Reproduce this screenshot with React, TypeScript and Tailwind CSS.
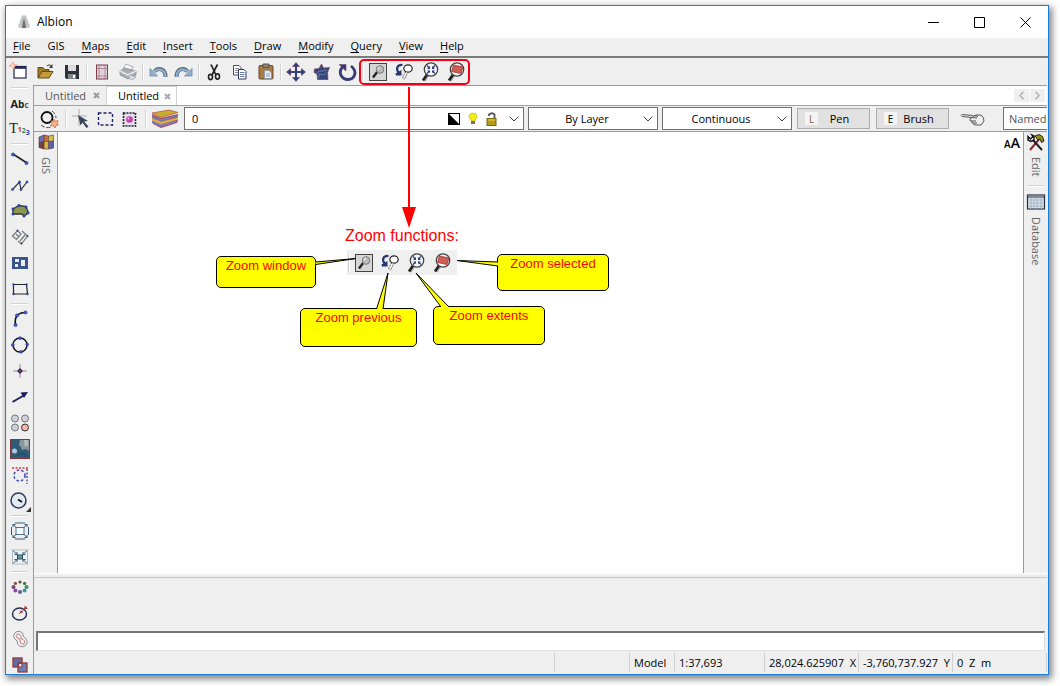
import React from 'react';
import { ChevronDown, ChevronLeft, ChevronRight } from 'lucide-react';

const menus = ['File', 'GIS', 'Maps', 'Edit', 'Insert', 'Tools', 'Draw', 'Modify', 'Query', 'View', 'Help'];

const Icon = ({ children }: { children: React.ReactNode }) => (
  <svg width="22" height="22" viewBox="0 0 22 22" fill="none" aria-hidden="true" className="shrink-0">
    {children}
  </svg>
);

const Dots = ({ points, r = 1.7 }: { points: number[][]; r?: number }) => (
  <>
    {points.map(([x, y]) => (
      <circle key={`${x}-${y}`} cx={x} cy={y} r={r} fill="#3f5bd0" stroke="#1c2f8f" strokeWidth="0.6" />
    ))}
  </>
);

/* Zoom icons, used in the toolbar and in the legend */
const ZoomWindowIcon = () => (
  <Icon>
    <rect x="2.5" y="2.5" width="17" height="17" fill="#d6d6d6" stroke="#444" />
    <path d="M10.5 10.5 6 16.5" stroke="#222" strokeWidth="2.4" />
    <circle cx="13" cy="8.5" r="3.8" fill="#b9bdbd" stroke="#777" />
    <path d="M11 8a2.3 2.3 0 0 1 2-2" stroke="#fff" />
  </Icon>
);

const ZoomPreviousIcon = () => (
  <Icon>
    <path d="M9.5 4C4.500 3.500 2.500 7.500 5.500 11.500" stroke="#27366f" strokeWidth="2.200" />
    <path d="M2.500 12.500 8.500 9v5.500H3z" fill="#27366f" />
    <ellipse cx="15" cy="7.500" rx="4.200" ry="3.700" fill="#fff" stroke="#222" strokeWidth="1.200" />
    <path d="m12.500 11-3 5.500 2 1.500 3-6" fill="#fff" stroke="#444" strokeDasharray="1.500 1" />
  </Icon>
);

const Lens = ({ children }: { children: React.ReactNode }) => (
  <Icon>
    <path d="M9.500 14 6 20" stroke="#bbb" strokeWidth="2" />
    <path d="M8.500 13 4 19.500" stroke="#222" strokeWidth="2.800" />
    <circle cx="12" cy="8.500" r="6.700" fill="#f4f6f8" stroke="#444" strokeWidth="1.300" />
    {children}
  </Icon>
);

const ZoomExtentsIcon = () => (
  <Lens>
    <path d="m8 4.500 2.500 2.500M16 4.500 13.500 7M8 12.500l2.500-2.500M16 12.500 13.500 10" stroke="#2c3a80" strokeWidth="1.200" />
    <path d="M11 5v3H8zM13 5v3h3zM11 12V9.500H8zM13 12V9.500h3z" fill="#2c3a80" />
  </Lens>
);

const ZoomSelectedIcon = () => (
  <Lens>
    <path d="m8.500 4 9.500 2-2 6.500-9.500-2z" fill="#cd5c55" stroke="#a33" strokeWidth="0.800" />
  </Lens>
);

const Lock = () => (
  <svg width="12" height="14" viewBox="0 0 12 14" fill="none" aria-hidden="true">
    <path d="M3 4V2.500Q6 0 8.500 2.500V7" stroke="#555" strokeWidth="1.800" />
    <rect x="1" y="6.500" width="9" height="7" fill="#b59a16" stroke="#7b6810" />
    <path d="M2 8h7" stroke="#e6d351" />
  </svg>
);

const mainTools: (null | [string, React.ReactNode])[] = [
  ['New', <Icon><rect x="5" y="5.500" width="12" height="11.500" fill="#fff" stroke="#26274f" strokeWidth="1.200" /><path d="M5 6.500h12" stroke="#26274f" strokeWidth="2.600" /><path d="m4 1 1 2.500L8 4 5.500 5.500 5 8 3 5.500 0 5l2.500-1.500z" fill="#ffd8c0" stroke="#f09070" strokeWidth="0.700" /></Icon>],
  ['Open', <Icon><path d="M3 17V6.500h5l1.500 2H14v2" fill="#a17b22" stroke="#5f4a1a" /><path d="M3 17 7 10.500h11L14 17z" fill="#c29b3a" stroke="#5f4a1a" /><path d="M12 5q2-2.500 4.500 0" stroke="#333" /><path d="M17.500 3v4H14z" fill="#333" /></Icon>],
  ['Save', <Icon><path d="M4 4h14v14H5.500L4 16.500z" fill="#303138" /><path d="M7 4h8v6H7z" fill="#d9dde2" /><path d="M7 13h8v5H7z" fill="#81868d" /><path d="M12 14h2v3h-2z" fill="#fff" /></Icon>],
  null,
  ['Page layout', <Icon><rect x="5.500" y="4" width="11" height="14" fill="#e0d4dc" stroke="#7b3c50" /><path d="M8 4v14M14 4v14M5.500 7.500h11M5.500 15h11" stroke="#a06a7c" strokeWidth="0.700" /></Icon>],
  ['Print', <Icon><path d="m9 3 7 3-3 5-7-3z" fill="#fff" stroke="#aaa" /><path d="m3 10 5-3 11 3v4l-8 4-8-4z" fill="#a8adb2" stroke="#8a8a8a" strokeWidth="0.800" /><path d="m3 10 8 4 8-4" stroke="#e8e8e8" strokeWidth="1.500" /><path d="m11 16 3-2 5 2-4 3z" fill="#cfe0ee" stroke="#999" strokeWidth="0.700" /></Icon>],
  null,
  ['Undo', <Icon><path d="M18.500 16C18.500 7.500 11 6 7.500 10.500" stroke="#52647b" strokeWidth="4" /><path d="M18.500 16C18.500 8 11 6.500 7.500 10.500" stroke="#94afcb" strokeWidth="2.200" /><path d="M3 7.500v7.500h7.500z" fill="#94afcb" stroke="#6f88a5" strokeWidth="0.800" /></Icon>],
  ['Redo', <Icon><path d="M3.500 16C3.500 7.500 11 6 14.500 10.500" stroke="#52647b" strokeWidth="4" /><path d="M3.500 16C3.500 8 11 6.500 14.500 10.500" stroke="#94afcb" strokeWidth="2.200" /><path d="M19 7.500v7.500h-7.500z" fill="#94afcb" stroke="#6f88a5" strokeWidth="0.800" /></Icon>],
  null,
  ['Cut', <Icon><path d="M8 3.500 13 14M14.500 3.500 9 14" stroke="#222" strokeWidth="1.700" /><ellipse cx="7.500" cy="16" rx="2" ry="2.600" stroke="#222" strokeWidth="1.600" /><ellipse cx="14.500" cy="15.500" rx="2" ry="2.600" stroke="#222" strokeWidth="1.600" /></Icon>],
  ['Copy', <Icon><path d="M4.500 4.500H10l2 2v7.500H4.500z" fill="#fff" stroke="#444a68" /><path d="M6 7.500h4M6 9.500h4M6 11.500h4" stroke="#889" /><path d="M9.500 8.500H15l2 2v7.500H9.500z" fill="#fff" stroke="#30365f" /><path d="M11 11.500h4.500M11 13.500h4.500M11 15.500h4.500" stroke="#6677a0" /></Icon>],
  ['Paste', <Icon><rect x="4" y="4.500" width="14" height="13.500" rx="1" fill="#a87c42" stroke="#67492a" /><path d="M8 3h6v3.500H8z" fill="#8b8781" stroke="#555" /><path d="M9.500 9.500H14l2.500 2.500v5.500h-7z" fill="#e9edf2" stroke="#8793a3" strokeWidth="0.800" /><path d="M11 13h4M11 15h4" stroke="#91a2b8" /></Icon>],
  null,
  ['Move', <Icon><path d="M11 3v16M3 11h16" stroke="#35417c" strokeWidth="2" /><path d="m11 1.500 3.500 4h-7zM11 20.500l3.500-4h-7zM1.500 11l4-3.500v7zM20.500 11l-4-3.500v7z" fill="#35417c" stroke="#602d48" strokeWidth="0.500" /></Icon>],
  ['Edit polygon', <Icon><path d="m10.500 3 2 4 6-.5-2 5 .5 7H6.500L6 13 3 11.500 3.500 8 8 7.500z" fill="#35467c" stroke="#803e55" strokeWidth="0.700" /><path d="m6 12 2-2h4l4-1M7.500 17l1-4 4 1 3-2" stroke="#6e7ba8" /></Icon>],
  ['Rotate', <Icon><path d="M5.500 6C.5 12 5 18.500 11 18.500S21.500 11 14 5" stroke="#343b74" strokeWidth="2.800" /><path d="M2 3.500h7v6.500z" fill="#343b74" stroke="#73364b" strokeWidth="0.500" /></Icon>],
  null,
  ['Zoom window', <ZoomWindowIcon />],
  ['Zoom previous', <ZoomPreviousIcon />],
  ['Zoom extents', <ZoomExtentsIcon />],
  ['Zoom selected', <ZoomSelectedIcon />],
];

const ring = Array.from({ length: 8 }, (_, i) => [11 + 6.5 * Math.cos((i * Math.PI) / 4), 11 + 5 * Math.sin((i * Math.PI) / 4)]);
const ringColors = ['#3e8a75', '#4f8f8f', '#5d5c9c', '#8a4a9a', '#7a3f87', '#7d5a40', '#6b5530', '#3f7a3b'];

const sideTools: (null | [string, React.ReactNode])[] = [
  null,
  ['Text style', <span className="flex items-baseline font-['Open_Sans',sans-serif] text-[11px] font-bold leading-none text-[#222]">A<span className="text-[10px]">b</span><span className="text-[8px] text-[#555]">c</span></span>],
  ['Numbered text', <span className="flex items-start font-['Liberation_Serif',serif] text-sm leading-none text-[#222]">T<span className="flex pt-1 font-['Open_Sans',sans-serif] text-[7px] leading-none font-bold"><span className="text-[#a23a3a]">1</span><span className="pt-px text-[#3a8a4a]">2</span><span className="pt-[3px] text-[#33409a]">3</span></span></span>],
  null,
  ['Line', <Icon><path d="m4 6 14 9" stroke="#222" strokeWidth="1.500" /><Dots points={[[4, 6.5], [17.5, 15]]} r={1.6} /></Icon>],
  ['Polyline', <Icon><path d="m3.500 15.500 7-7.500 1.500 7.500L18 8" stroke="#333" strokeWidth="1.200" /><Dots points={[[3.5, 15.5], [10.5, 8], [12, 15.5], [18, 8]]} r={1.1} /></Icon>],
  ['Polygon', <Icon><path d="M4 9 10 5.500l7 1L19.500 13 15 16l-2-2H4z" fill="#8b9653" stroke="#333" strokeWidth="1.300" /><Dots points={[[4, 9], [10, 5.5], [17, 7], [19, 13], [15, 16], [4, 14]]} r={1.2} /></Icon>],
  ['Parallel lines', <Icon><path d="m3.500 10 5-5.500L12 8l-4.500 5.500zM7 8l3 3M13 5l5.500 5-6 8-3.500-3M16 9l-5 6" stroke="#777" strokeWidth="1.200" /><Dots points={[[8.5, 4.500], [18.5, 10], [12.5, 17.5]]} r={0.7} /></Icon>],
  ['Block', <Icon><rect x="3" y="5" width="16" height="12" fill="#3b5488" /><path d="M6 7h4v3H6zM12 8h4v6h-4zM6 12h3v3H6z" fill="#e8ecf3" /></Icon>],
  ['Rectangle', <Icon><path d="M4.500 6.500h13l1 9.500h-14z" stroke="#222" strokeWidth="1.200" /><Dots points={[[4.5, 6.5], [17.5, 6.5], [18.5, 16], [4.5, 16]]} r={0.9} /></Icon>],
  null,
  ['Arc', <Icon><path d="M6.500 17Q4.500 4.500 17 4.500" stroke="#111" strokeWidth="1.600" /><Dots points={[[6.5, 17], [8, 7.5], [16.5, 4.5]]} r={1.6} /></Icon>],
  ['Circle', <Icon><circle cx="11" cy="11" r="7" stroke="#111" strokeWidth="1.400" /><Dots points={[[11, 4.200], [3.8, 11], [18.2, 10.5], [12, 17.8]]} r={1.4} /></Icon>],
  ['Point', <Icon><path d="M11 4v14M4 11h14" stroke="#8b7772" strokeWidth="0.800" /><path d="m11 8 3 3-3 3-3-3z" fill="#30265c" /><circle cx="11" cy="11" r="1" fill="#b83b4b" /></Icon>],
  ['Arrow', <Icon><path d="m3.500 16 12-7" stroke="#1d1c60" strokeWidth="2" /><path d="m11.500 6.500 7.500-.5-4 6z" fill="#1d1c60" /></Icon>],
  ['Symbols', <Icon><circle cx="6" cy="6.500" r="3.500" fill="#cdd0da" stroke="#777" /><circle cx="16" cy="6.500" r="3.500" fill="#cdd0da" stroke="#777" /><circle cx="6" cy="15.500" r="3.500" fill="#cdd0da" stroke="#777" /><circle cx="16" cy="15.500" r="3.500" fill="#f2b6a5" stroke="#333" /></Icon>],
  ['Raster', <Icon><rect x="1.500" y="1.500" width="19" height="19" fill="#2f5b78" stroke="#83353d" /><path d="M11 2h9v11l-3-2-4 1-1-3-2-2z" fill="#8b979b" /><path d="M15 2h4v5l-3 2z" fill="#b5bcbc" /><circle cx="5.500" cy="13" r="2.500" fill="#a9c9df" /><path d="m8 18 4-3 6 3" stroke="#274f6a" strokeWidth="2" /></Icon>],
  ['Clip', <Icon><path d="M3 4h17" stroke="#d33" strokeWidth="1.400" strokeDasharray="2 1.500" /><path d="M18 5v15" stroke="#3940a8" strokeWidth="1.300" strokeDasharray="2 1.500" /><circle cx="10.500" cy="11.500" r="5.500" stroke="#454bb0" strokeWidth="1.500" strokeDasharray="2.500 2" /></Icon>],
  ['Radius', <Icon><circle cx="9.500" cy="10.500" r="7.500" fill="#e4e9f1" stroke="#2f3b5d" strokeWidth="1.500" /><path d="m9 9.500 4 2.500" stroke="#111" strokeWidth="1.800" /><path d="M22 17v5h-5z" fill="#333" /></Icon>],
  null,
  ['Scale out', <Icon><rect x="7" y="7.500" width="8" height="7" fill="#f5f8fa" stroke="#527388" /><path d="M7.500 8 4 4.500M14.500 8 18 4.500M7.500 14 4 17.500m10.500-3.500 3.500 3.500M4 7V4.500h2.500m9 0H18V7M4 15v2.500h2.500m9 0H18V15M6 3h10M6 19h10M2.500 7v8M19.500 7v8" stroke="#345b74" /></Icon>],
  ['Scale in', <Icon><rect x="3.500" y="4" width="15" height="14" fill="#eef2f5" stroke="#b0bbc4" /><rect x="8.500" y="9" width="5" height="4" fill="#7893a6" stroke="#254c65" /><path d="m4 4.500 4 4m10-4-4 4m-10 9 4-4m10 4-4-4M5.500 8.500H8V6m6 0v2.500h2.500M5.500 13.500H8V16m6 0v-2.500h2.500" stroke="#345b74" /></Icon>],
  null,
  ['Point ring', <Icon>{ring.map(([x, y], i) => <circle key={i} cx={x} cy={y} r={i < 5 ? 2 : 1.6} fill={ringColors[i]} />)}</Icon>],
  ['Offset circle', <Icon><ellipse cx="10.500" cy="12" rx="7" ry="6" stroke="#252c55" strokeWidth="1.400" /><path d="m10 12 8-7.500" stroke="#8e3030" strokeDasharray="3 2" /><path d="m10.500 9 3-.5v3zM15.500 3.500V7h3.500z" fill="#9e2e2e" /></Icon>],
  ['Buffer', <Icon><path d="M8 3.500q6-1 6.500 5Q21 13 16 18q-7 3-8-5Q1 7 8 3.500z" stroke="#888d97" /><path d="M8.500 6q4 0 3.500 4.500 5 1.500 3 5.500-4 1-4-4.500Q5 9 8.500 6z" stroke="#c57a75" /></Icon>],
  ['Overlay', <Icon><rect x="4" y="4" width="9" height="9" fill="#5971a4" stroke="#9a3535" strokeWidth="1.300" /><rect x="9" y="9" width="9" height="9" fill="#6581b5" stroke="#9a3535" strokeWidth="1.300" /><path d="M9.500 9.500H13V13H9.500z" fill="#ddd" stroke="#9a3535" /></Icon>],
];

const ToolButton = ({ label, className, children }: { label: string; className: string; children: React.ReactNode }) => (
  <button type="button" aria-label={label} className={`flex shrink-0 items-center justify-center ${className}`}>
    {children}
  </button>
);

const VSep = ({ className = 'w-1' }: { className?: string }) => (
  <div className={`flex shrink-0 justify-center ${className}`}>
    <div className="h-[18px] w-[2px] border-l border-[#d2d2d2] bg-white" />
  </div>
);

const Combo = ({ label, value, children }: { label: string; value: string; children?: React.ReactNode }) => (
  <div className={`relative h-[23px] shrink-0 ${children ? 'w-[340px]' : 'w-[130px]'}`}>
    <select
      aria-label={label}
      className={`h-full w-full appearance-none border border-[#707070] bg-white text-black ${children ? 'pl-[7px]' : 'pr-3 text-center'}`}
    >
      <option>{value}</option>
    </select>
    <div className="pointer-events-none absolute inset-y-0 right-[2px] flex items-center gap-2">
      {children}
      <ChevronDown size={16} strokeWidth={1.5} className="text-[#444]" />
    </div>
  </div>
);

const PenButton = ({ letter, label, tint }: { letter: string; label: string; tint: string }) => (
  <button type="button" className="flex h-[21px] w-[73px] shrink-0 items-center border border-[#adadad] bg-[#e1e1e1] pl-[7px]">
    <span className={`flex h-[13px] w-[13px] items-center justify-center bg-[#f4f4f4] text-[10px] ${tint}`}>{letter}</span>
    <span className="flex-1 pr-2 text-center">{label}</span>
  </button>
);

const Callout = ({ className, children }: { className: string; children: React.ReactNode }) => (
  <div className={`absolute rounded-[5px] border border-black bg-[#ffff00] pt-px text-center text-[13px] leading-4 text-[#ff0000] ${className}`}>
    {children}
  </div>
);

const Annotations = () => (
  <div className="pointer-events-none absolute inset-0 font-['Liberation_Sans',Arial,sans-serif] text-[#ff0000]">
    <div className="absolute left-[359px] top-[59px] h-[26px] w-[111px] rounded-[5px] border-2 border-[#f00014]" />
    <div className="absolute left-[345px] top-[226px] text-base leading-5 whitespace-nowrap">Zoom functions:</div>

    <div className="absolute left-[347px] top-[250px] flex h-[25px] w-[110px] items-center bg-[#efefef]">
      <VSep />
      <div className="flex gap-1 pl-[2px]">
        <ZoomWindowIcon />
        <ZoomPreviousIcon />
        <ZoomExtentsIcon />
        <ZoomSelectedIcon />
      </div>
    </div>

    <Callout className="left-[216px] top-[256px] h-8 w-[100px]">Zoom window</Callout>
    <Callout className="left-[300px] top-[308px] h-[39px] w-[117px]">Zoom previous</Callout>
    <Callout className="left-[433px] top-[306px] h-[39px] w-[112px]">Zoom extents</Callout>
    <Callout className="left-[497px] top-[254px] h-[37px] w-[112px]">Zoom selected</Callout>

    {/* Arrow and callout tails */}
    <svg width="420" height="320" viewBox="210 60 420 320" aria-hidden="true" className="absolute left-[210px] top-[60px]">
      <path d="M409 87v122" stroke="#ff0000" strokeWidth="2" />
      <path d="M402 207h14l-7 21z" fill="#ff0000" />
      <g fill="#ffff00" stroke="#000">
        <path d="m315.500 262 40.500-3.500-40.500 6" />
        <path d="m376.500 309 11.500-36-5 36" />
        <path d="m441 307-25-34 33 34" />
        <path d="m498 262-41-1.500 41 5.500" />
      </g>
    </svg>
  </div>
);

export default function App() {
  return (
    <div className="relative flex h-screen flex-col bg-white pt-[5px] pr-[11px] pb-[11px] pl-[5px] font-['Open_Sans','Segoe_UI',sans-serif] text-[11px] leading-4 text-black">
      <div className="flex min-h-0 flex-1 flex-col overflow-hidden border border-[#1a7fd4] bg-[#efefef] shadow-[2px_3px_7px_1px_rgba(0,0,0,0.5)]">
        {/* Title bar */}
        <header className="flex h-8 shrink-0 items-center bg-white pl-[11px] text-xs">
          <svg width="14" height="16" viewBox="0 0 14 16" aria-hidden="true">
            <path d="M1 13 5 2q2-2 4 0l4 11-3 1-1-3H5l-1 3z" fill="#c0c2c3" stroke="#ddd" />
            <path d="m7 4 2.500 10h-5z" fill="#6f7374" />
          </svg>
          <h1 className="flex-1 pl-[6px]">Albion</h1>
          <ToolButton label="Minimize" className="h-full w-[46px]">
            <svg width="11" height="11" stroke="#000" aria-hidden="true"><path d="M0 5.500h11" /></svg>
          </ToolButton>
          <ToolButton label="Maximize" className="h-full w-[46px]">
            <svg width="11" height="11" fill="none" stroke="#000" aria-hidden="true"><path d="M.5.5h10v10H.5z" /></svg>
          </ToolButton>
          <ToolButton label="Close" className="h-full w-[46px]">
            <svg width="11" height="11" stroke="#000" aria-hidden="true"><path d="m.5.5 10 10m0-10-10 10" /></svg>
          </ToolButton>
        </header>

        {/* Menu bar */}
        <nav className="flex h-5 shrink-0 items-start gap-[17px] border-b-2 border-[#7b7b7b] pl-[7px]">
          {menus.map((menu) => (
            <button key={menu} type="button" className="leading-4">
              {menu === 'GIS' ? menu : <><span className="underline underline-offset-2">{menu[0]}</span>{menu.slice(1)}</>}
            </button>
          ))}
        </nav>

        {/* Main toolbar */}
        <div className="flex h-[27px] shrink-0 items-center pl-px">
          {mainTools.map((tool, i) =>
            tool ? <ToolButton key={i} label={tool[0]} className="h-[26px] w-[26px]">{tool[1]}</ToolButton> : <VSep key={i} />
          )}
        </div>

        <div className="flex min-h-0 flex-1">
          {/* Drawing tools */}
          <aside className="flex w-[27px] shrink-0 flex-col overflow-hidden pt-px">
            {sideTools.map((tool, i) =>
              tool ? (
                <ToolButton key={i} label={tool[0]} className="h-[26px] w-full">{tool[1]}</ToolButton>
              ) : (
                <div key={i} className="flex h-1 shrink-0 items-center justify-center">
                  <div className="h-[2px] w-[17px] border-t border-[#d2d2d2] bg-white" />
                </div>
              )
            )}
          </aside>

          <main className="mr-px flex min-w-0 flex-1 flex-col border-t border-l border-[#9a9a9a]">
            {/* Document tabs */}
            <div className="flex h-5 shrink-0 border-b border-[#a0a0a0] bg-white">
              <button type="button" className="flex w-[73px] items-center justify-between border-r border-[#d4d4d4] bg-[#efefef] pr-[6px] pl-[11px] text-[#555]">
                Untitled
                <svg width="7" height="7" stroke="#999" strokeWidth="2" aria-hidden="true"><path d="m1 1 5 5m0-5L1 6" /></svg>
              </button>
              <button type="button" className="flex w-[70px] items-center justify-between border-t border-r border-[#d4d4d4] pr-[5px] pl-[11px]">
                Untitled
                <svg width="7" height="7" stroke="#aaa" strokeWidth="2" aria-hidden="true"><path d="m1 1 5 5m0-5L1 6" /></svg>
              </button>
              <div className="flex flex-1 items-center justify-end gap-px pr-[2px] pb-px text-[#b4b4b4]">
                <ToolButton label="Previous tab" className="h-[13px] w-[15px] bg-[#efefef]"><ChevronLeft size={13} strokeWidth={3} /></ToolButton>
                <ToolButton label="Next tab" className="h-[13px] w-[15px] bg-[#efefef]"><ChevronRight size={13} strokeWidth={3} /></ToolButton>
              </div>
            </div>

            {/* Layer bar */}
            <div className="flex h-[26px] shrink-0 items-center overflow-hidden border-b border-[#9a9a9a] pl-[2px]">
              <ToolButton label="Select similar" className="w-[26px]">
                <Icon>
                  <circle cx="9" cy="9.500" r="5.500" stroke="#111" strokeWidth="1.800" />
                  <path d="M3 17q5 4 10 2M14 3q4 3 4 7" stroke="#444" strokeDasharray="4 2" />
                  <path d="m16 11 1 2.500 3-1-1 3 1.500 1.500-2.500.5-1 2.500-1.500-2.500-3 .5 1.500-2.500-1-2.500 2.500.5z" fill="#fbb48a" stroke="#d9653b" strokeWidth="0.800" />
                </Icon>
              </ToolButton>
              <VSep className="w-2" />
              <ToolButton label="Select" className="w-6">
                <Icon>
                  <path d="M8 1v17M1 8h15" stroke="#c4c4c0" strokeWidth="1.500" />
                  <path d="m7 7 10 6-4 .5 4.500 5-2 1.500-4-5.500-2 3z" fill="#3a4258" />
                </Icon>
              </ToolButton>
              <ToolButton label="Select by window" className="w-6">
                <Icon><rect x="3.500" y="5" width="14" height="12" stroke="#1f1f66" strokeWidth="1.400" strokeDasharray="3 2" /></Icon>
              </ToolButton>
              <ToolButton label="Select inside" className="w-6">
                <Icon>
                  <rect x="4.500" y="5" width="12" height="13" fill="#e2dfe5" stroke="#222239" strokeWidth="1.600" strokeDasharray="2 1" />
                  <circle cx="10.500" cy="11.500" r="3.300" fill="#c83bb8" />
                  <circle cx="9.500" cy="10.500" r="1" fill="#ffc5f5" />
                </Icon>
              </ToolButton>
              <VSep className="w-2" />
              <ToolButton label="Layers" className="w-[30px]">
                <svg width="30" height="20" viewBox="0 0 30 20" aria-hidden="true">
                  <path d="m2 5 9 4 17-4-1 9-16 5-8-4z" fill="#b34a4a" />
                  <path d="m2 11.500 9 3.500 17-4v2l-17 5-9-4z" fill="#7c77bb" />
                  <path d="m2 9 9 3.500 17-4v2l-17 5-9-4z" fill="#d9af42" />
                  <path d="m2 7 9 3 17-4v1.500l-17 5-9-3.500z" fill="#7c77bb" />
                  <path d="m2 4 17-3 9 2.500-17 5z" fill="#c8ac32" stroke="#a7553b" strokeWidth="0.700" />
                </svg>
              </ToolButton>
              <div className="flex gap-1 pr-[5px] pl-1">
                <Combo label="Layer" value="0">
                  <svg width="12" height="12" aria-hidden="true"><rect x=".5" y=".5" width="11" height="11" fill="#fff" stroke="#000" /><path d="m0 0 12 12H0z" /></svg>
                  <svg width="10" height="14" viewBox="0 0 10 14" aria-hidden="true"><path d="M5 1q4 0 4 3.500L7 9H3L1 4.500Q1 1 5 1z" fill="#f2ec19" stroke="#b9ad20" strokeWidth="0.600" /><path d="M3 9h4v3H3z" fill="#77756c" /></svg>
                  <Lock />
                </Combo>
                <Combo label="Color" value="By Layer" />
                <Combo label="Line type" value="Continuous" />
              </div>
              <div className="flex gap-[6px]">
                <PenButton letter="L" label="Pen" tint="text-[#8a6030]" />
                <PenButton letter="E" label="Brush" tint="text-black" />
              </div>
              <ToolButton label="Match properties" className="mx-[10px] w-7">
                <svg width="26" height="14" viewBox="0 0 26 14" fill="none" stroke="#555" aria-hidden="true">
                  <path d="M13 3.500 2 2.500Q0 3.500 2 4.500l10 1-2 1.500q-1 2 2 2-1 2 1 2 0 2 3 2h5l3-4q0-4-3-6h-5l-3 1.500zM12 5.500l5 .5M12 9h4M13 11h4M14 3.500l4 1" />
                </svg>
              </ToolButton>
              <input aria-label="Style" defaultValue="Named" className="ml-[6px] h-[23px] min-w-0 flex-1 border border-r-0 border-[#707070] bg-white pl-[5px] text-[#555]" />
            </div>

            {/* Workspace */}
            <div className="flex min-h-0 flex-1">
              <button type="button" className="flex w-6 shrink-0 flex-col items-center border-r border-[#9a9a9a] text-[#666]">
                <Icon>
                  <path d="m4 5 5-2v6.500l-5 1z" fill="#6571b3" />
                  <path d="m9 3 4.500 1v5.500H9z" fill="#c76d42" />
                  <path d="m13.500 4 5-1v6l-5 .5z" fill="#d6bd4b" />
                  <path d="m4 10.500 5-1V17l-5-1.500z" fill="#7a3b42" />
                  <path d="M9 9.500h4.500V17H9z" fill="#d4b63b" />
                  <path d="m13.500 9.500 5-.5v7l-5 1z" fill="#5960a8" />
                  <path d="m4 5 5-2 4.500 1 5-1v13l-5 1H9l-5-1.500zM9 3v14m4.500-13v13M4 10.500l5-1h4.500l5-.5" stroke="#4a3035" strokeWidth="0.600" />
                </Icon>
                <span className="mt-[3px] [writing-mode:vertical-rl]">GIS</span>
              </button>

              <div className="flex flex-1 justify-end bg-white px-[3px] pt-[3px]">
                <button type="button" aria-label="Text size" className="flex h-4 items-baseline text-sm leading-4 font-semibold">
                  <span className="text-[10px]">A</span>A
                </button>
              </div>

              <div className="flex w-6 shrink-0 flex-col items-center border-l border-[#9a9a9a] text-[#666]">
                <button type="button" className="flex flex-col items-center">
                  <Icon>
                    <path d="m5 18 10-12" stroke="#8f2430" strokeWidth="2" />
                    <path d="m7 7 10 11" stroke="#222" strokeWidth="2" />
                    <path d="M3 4.500 5.500 7 8 4.500 7 3l2 1v4L6 9.500 3 8z" fill="#fff" stroke="#111" strokeWidth="1.400" />
                    <path d="m10 4 4-1.500 3.500 2L19 9l-2.500 1.500L15 7l-2 1z" fill="#929019" stroke="#222" />
                  </Icon>
                  <span className="mt-[3px] [writing-mode:vertical-rl]">Edit</span>
                </button>
                <div className="mt-2 h-[2px] w-[18px] border-t border-[#d2d2d2] bg-white" />
                <button type="button" className="mt-1 flex flex-col items-center">
                  <Icon>
                    <rect x="2.500" y="4" width="17" height="14" fill="#dde3ed" stroke="#263242" strokeWidth="1.200" />
                    <path d="M3 6h16" stroke="#263242" />
                    <path d="M3 9h16M3 12h16M3 15h16M6 7v11M9 7v11M12 7v11M16 7v11" stroke="#9eacbf" strokeWidth="0.800" />
                  </Icon>
                  <span className="mt-1 [writing-mode:vertical-rl]">Database</span>
                </button>
              </div>
            </div>

            <div className="h-1 shrink-0 border-t border-white" />
            <div className="h-[54px] shrink-0 border-t border-[#c6c6c6]" />
            <div className="flex shrink-0 pr-[2px] pl-[2px]">
              <input aria-label="Command" className="h-5 min-w-0 flex-1 border-t-2 border-r border-b border-l-2 border-t-[#757575] border-r-[#ddd] border-b-[#e2e2e2] border-l-[#757575] bg-white px-1" />
            </div>

            {/* Status bar */}
            <footer className="flex h-[23px] shrink-0 items-center py-[2px] whitespace-pre *:flex *:h-full *:shrink-0 *:items-center *:border-r *:border-[#d0d0d0]">
              <span className="min-w-0 flex-1" />
              <span className="w-[75px]" />
              <span className="w-[45px] pl-1">Model</span>
              <span className="w-[90px] pl-1">1:37,693</span>
              <span className="w-[94px] pl-1">28,024.625907  X</span>
              <span className="w-[94px] pl-1">-3,760,737.927  Y</span>
              <span className="w-[94px] pl-1">0  Z  m</span>
            </footer>
          </main>
        </div>
      </div>

      <Annotations />
    </div>
  );
}
